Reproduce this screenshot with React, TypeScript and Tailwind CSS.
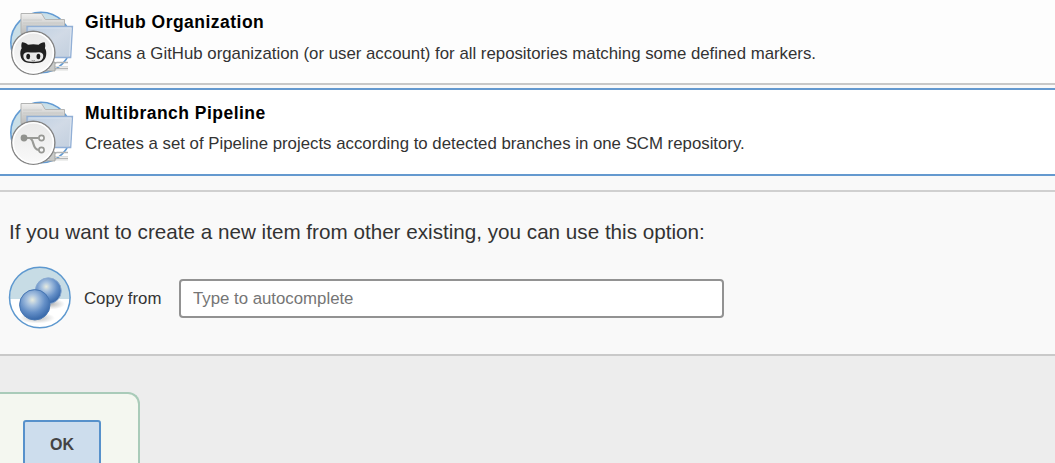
import type { ReactNode } from "react";

function FolderIcon({ children, id }: { children: ReactNode; id: string }) {
  return (
    <svg width="68" height="68" viewBox="8 8 68 68" className="block shrink-0">
      <defs>
        <linearGradient id={`${id}-back`} x1="0" y1="0" x2="0" y2="1">
          <stop offset="0" stopColor="#f0f0ef" />
          <stop offset="0.5" stopColor="#d3d3d2" />
          <stop offset="1" stopColor="#bcbcba" />
        </linearGradient>
        <linearGradient id={`${id}-front`} x1="0" y1="0" x2="1" y2="1">
          <stop offset="0" stopColor="#bdcfe2" />
          <stop offset="0.5" stopColor="#d1dae6" />
          <stop offset="1" stopColor="#c2cfde" />
        </linearGradient>
        <linearGradient id={`${id}-disc`} x1="0" y1="0" x2="0" y2="1">
          <stop offset="0" stopColor="#e8e8e8" />
          <stop offset="1" stopColor="#fafafa" />
        </linearGradient>
        <clipPath id={`${id}-clip`}>
          <circle cx="41" cy="43" r="30" />
        </clipPath>
      </defs>
      <circle cx="41" cy="42.5" r="30.2" fill="#fff" />
      <rect x="8" y="8" width="68" height="36" fill="#c9dfe8" clipPath={`url(#${id}-clip)`} />
      <circle cx="41" cy="42.5" r="30.2" fill="none" stroke="#629bd3" strokeWidth="1.6" />
      <path d="M21 13.5h20.5l3.8 6h19.2v14H21z" fill={`url(#${id}-back)`} stroke="#b3b4b3" strokeWidth="1" />
      <path d="M23 20h19M23 23h40M23 26h40" stroke="#c4c5c4" strokeWidth="0.7" />
      <path d="M27 26.5h45.5l-1.8 31H27.5z" fill={`url(#${id}-front)`} stroke="#91afd6" strokeWidth="1.3" />
      <path d="M28.5 28h42.6l-1.6 28" fill="none" stroke="#dde7f2" strokeWidth="0.8" />
      <path d="M46 65l6-1 5-1.5h11M47 68.5h21M45 71l7-1 4-1" fill="none" stroke="#b3b5b5" strokeWidth="1.5" />
      <path d="M49 66.5h19M52 70h16" stroke="#dedfde" strokeWidth="1" />
      <path d="M51 62h4v9h-6" fill="#c8cac8" stroke="#999c99" strokeWidth="0.8" />
      <circle cx="33.3" cy="52.8" r="21.6" fill={`url(#${id}-disc)`} stroke="#858585" strokeWidth="1.4" />
      <circle cx="33.3" cy="52.8" r="20" fill="none" stroke="#fff" strokeWidth="1.5" />
      {children}
    </svg>
  );
}

function GitHubFolderIcon() {
  return (
    <FolderIcon id="github">
      <path
        d="M22 42.3c2-.2 4.4 1.1 6 2.5 3.5-.7 7.1-.7 10.6 0 1.7-1.4 4-2.7 6-2.5.8 2 .9 4.1.3 6 1.3 1.8 1.7 4.4 1.2 7.3-1 5.6-4.4 7.6-12.8 7.6s-11.8-2-12.8-7.6c-.5-2.9-.1-5.5 1.2-7.3-.6-1.9-.5-4 .3-6z"
        fill="#202020"
      />
      <path
        d="M27.2 52.3c2.2-.2 4 .3 6.1.3s3.9-.5 6.1-.3c3.1.3 4.2 2.1 3.8 4.4-.5 3.7-3.2 5.1-9.9 5.1s-9.4-1.4-9.9-5.1c-.4-2.3.7-4.1 3.8-4.4z"
        fill="#e9e9e9"
      />
      <ellipse cx="28.2" cy="56.5" rx="1.9" ry="2.8" fill="#1c1c1c" />
      <ellipse cx="38.4" cy="56.5" rx="1.9" ry="2.8" fill="#1c1c1c" />
      <path d="M31.6 60.4q1.7 1 3.4 0" stroke="#777" fill="none" strokeWidth="0.7" />
    </FolderIcon>
  );
}

function BranchFolderIcon() {
  return (
    <FolderIcon id="branch">
      <path d="M24.5 48h14M29 48c6 0 2.5 11.8 9.8 11.8" fill="none" stroke="#999a96" strokeWidth="2.2" />
      <circle cx="24" cy="48" r="3.4" fill="#91928e" />
      <circle cx="41.5" cy="48" r="2.6" fill="#f5f5f5" stroke="#969793" strokeWidth="1.6" />
      <circle cx="41.5" cy="60" r="2.6" fill="#f5f5f5" stroke="#969793" strokeWidth="1.6" />
    </FolderIcon>
  );
}

function CopyIcon() {
  return (
    <svg width="64" height="64" viewBox="8 266 64 64" className="block shrink-0">
      <defs>
        <radialGradient id="ball" cx="0.42" cy="0.34" r="0.64">
          <stop offset="0" stopColor="#e7ebdf" />
          <stop offset="0.28" stopColor="#a8c2df" />
          <stop offset="0.65" stopColor="#648fc7" />
          <stop offset="1" stopColor="#3b6bab" />
        </radialGradient>
        <radialGradient id="shade">
          <stop offset="0" stopColor="#777" stopOpacity="0.55" />
          <stop offset="1" stopColor="#888" stopOpacity="0" />
        </radialGradient>
        <clipPath id="copy-clip">
          <circle cx="39.8" cy="297.5" r="30" />
        </clipPath>
      </defs>
      <circle cx="39.8" cy="297.5" r="30.3" fill="#fff" />
      <rect x="8" y="266" width="64" height="33" fill="#c7dce5" clipPath="url(#copy-clip)" />
      <circle cx="39.8" cy="297.5" r="30.3" fill="none" stroke="#5d98cf" strokeWidth="1.5" />
      <ellipse cx="51" cy="304" rx="14" ry="5.5" fill="url(#shade)" />
      <circle cx="48.3" cy="290.8" r="13" fill="url(#ball)" stroke="#8aa9d0" strokeWidth="0.9" />
      <ellipse cx="37" cy="318" rx="18" ry="5.5" fill="url(#shade)" />
      <circle cx="34.8" cy="304.8" r="15.2" fill="url(#ball)" stroke="#4676b3" strokeWidth="1" />
    </svg>
  );
}

export default function App() {
  return (
    <div className="flex h-[463px] w-full flex-col overflow-hidden bg-[#ededed] font-['Liberation_Sans',sans-serif] text-[#333]">
      <main className="h-[356px] shrink-0 border-b-2 border-[#c9c9c9] bg-[#f9f9f9]">
        <section className="flex h-[85px] border-b-2 border-[#c8c8c8] bg-[#fdfdfd] pt-2 pl-2">
          <GitHubFolderIcon />
          <div className="ml-[9px] whitespace-nowrap">
            <h2 className="mt-[3px] text-[17.5px] leading-[22px] font-bold tracking-[0.48px] text-black">GitHub Organization</h2>
            <p className="mt-2.5 text-[16.81px] leading-[22px]">Scans a GitHub organization (or user account) for all repositories matching some defined markers.</p>
          </div>
        </section>
        <section className="mt-[3px] flex h-[88px] border-y-2 border-[#6499cf] bg-white pt-2 pl-2">
          <BranchFolderIcon />
          <div className="ml-[9px] whitespace-nowrap">
            <h2 className="mt-1 text-[17.5px] leading-[22px] font-bold tracking-[0.48px] text-black">Multibranch Pipeline</h2>
            <p className="mt-[9px] text-[16.81px] leading-[22px]">Creates a set of Pipeline projects according to detected branches in one SCM repository.</p>
          </div>
        </section>
        <section className="mt-[14px] border-t-2 border-[#d0d0d0] pt-[26px]">
          <h3 className="ml-[9px] text-[20.66px] leading-7 whitespace-nowrap">If you want to create a new item from other existing, you can use this option:</h3>
          <div className="mt-5 flex items-center pl-2">
            <CopyIcon />
            <label htmlFor="from" className="ml-3 w-[95px] pt-0.5 text-[16.8px] whitespace-nowrap">Copy from</label>
            <input
              id="from"
              placeholder="Type to autocomplete"
              className="h-[39px] w-[545px] rounded-[4px] border-2 border-[#929292] bg-white px-3 pt-0.5 text-[16.8px] text-[#333] outline-none placeholder:text-[#757575]"
            />
          </div>
        </section>
      </main>
      <footer className="pt-9">
        <div className="h-[90px] w-[140px] rounded-tr-xl border-t-2 border-r-2 border-[#a9cbb9] bg-[#f4f7f0] pt-[26px] pl-[23px]">
          <button className="h-[52px] w-[78px] rounded-[3px] border-2 border-[#5791cb] bg-[#cddded] pb-0.5 text-[16px] font-bold text-[#444]">OK</button>
        </div>
      </footer>
    </div>
  );
}
